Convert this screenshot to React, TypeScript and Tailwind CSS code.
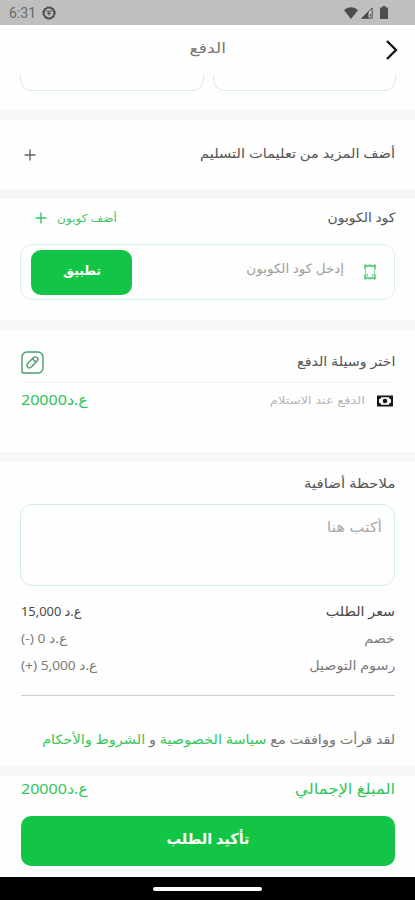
import React from 'react';
import { clsx } from 'clsx';

interface LabelProps {
  children: React.ReactNode;
  className?: string;
}

const Label: React.FC<LabelProps> = ({ children, className }) => (
  <span className={clsx('inline-block whitespace-nowrap', className)}>{children}</span>
);

const Divider = () => <div className="h-2.5 shrink-0 bg-[#f5f8f6]" />;

const StatusBar = () => (
  <div dir="ltr" className="flex h-[25px] shrink-0 items-center bg-[#bfbfbf] pl-[9px] pr-[27px] text-[#4d4d4d]">
    <span className="w-[27px] font-[Roboto] text-[14px] leading-none text-[#686868]">6:31</span>
    <svg className="ml-[6px]" width="14" height="14" viewBox="0 0 14 14" fill="none" stroke="currentColor">
      <circle cx="7" cy="7" r="5.3" strokeWidth="1.8" />
      <circle cx="7" cy="7" r="6.3" strokeWidth="1" strokeDasharray="1.6 1.7" />
      <path d="M4 5.2h6M7 5.4v4.2M5 7.4h4" strokeWidth="1" />
    </svg>
    <div className="ml-auto flex items-center">
      <svg width="14" height="12" viewBox="0 0 14 12" fill="currentColor">
        <path d="M0 3.2C4-.9 10-.9 14 3.2L7 12z" />
      </svg>
      <svg className="ml-[3px]" width="12" height="12" viewBox="0 0 12 12">
        <path d="M11.2.9v10.3H.9z" fill="none" stroke="currentColor" strokeWidth="1" />
        <path d="M7.5 4.5v7H.3z" fill="currentColor" />
        <path d="M9.5 7v2.5" stroke="currentColor" strokeWidth="1" />
      </svg>
      <svg className="ml-[7px]" width="8" height="13" viewBox="0 0 8 13" fill="currentColor">
        <path d="M2.5 0h3v1.5H8V13H0V1.5h2.5z" />
      </svg>
    </div>
  </div>
);

const PlusIcon: React.FC<{ className?: string }> = ({ className }) => (
  <svg className={className} width="12" height="12" viewBox="0 0 12 12" fill="none" stroke="currentColor" strokeWidth="1.4">
    <path d="M6 .5v11M.5 6h11" />
  </svg>
);

const TicketIcon = () => (
  <svg width="12" height="16" viewBox="0 0 12 16" fill="none" stroke="#3cc561" strokeWidth="1.4">
    <path d="M1 10.500V14.800c1.500 0 1.500-1.300 2.500-1.300s1.500 1.300 2.500 1.300 1.500-1.300 2.500-1.300 1 1.300 2.500 1.300v-4.300M1 5.500V1.200c1.500 0 1.500 1.300 2.500 1.300S5 1.200 6 1.200s1.500 1.300 2.500 1.300S9.500 1.200 11 1.200v4.300" />
    <path d="M1 5.500c1 1.500 1 3.500 0 5M11 5.500c-1 1.500-1 3.500 0 5" strokeWidth="0.800" />
    <path d="M2.500 11h1.500M8 11h1.500" />
  </svg>
);

const EditIcon = () => (
  <svg width="23" height="23" viewBox="0 0 23 23" fill="none" stroke="#4a9d6a" strokeWidth="1.4">
    <path d="M1 6a5 5 0 0 1 5-5h11a5 5 0 0 1 5 5v11a5 5 0 0 1-5 5H2.500Q1 22 1 20.500z" />
    <path
      d="M6.500 12.700 12.300 6.800c1.300-1.300 3-1.300 4 0 .9 1.100.7 2.400-.4 3.500l-5.300 5.400c-1 1-2.600 1.400-3.700 1-.9-.8-1.300-3-.4-4zM12 7.500c.3 1.800 1.500 3 3.300 3.300"
      strokeWidth="1.400"
      strokeLinejoin="round"
    />
  </svg>
);

const CashIcon = () => (
  <svg width="16" height="12" viewBox="0 0 16 12">
    <path d="M0 .5h16v11H0z" fill="#151515" />
    <path d="M4 2.300h8c0 1.300.7 2 2 2v3.400c-1.300 0-2 .7-2 2H4c0-1.300-.7-2-2-2V4.300c1.300 0 2-.7 2-2z" fill="#fff" />
    <circle cx="8" cy="6" r="2.300" fill="#151515" />
  </svg>
);

const prices = [
  { label: 'سعر الطلب', value: 'ع.د 15,000', tone: 'text-[#484848]', stretch: 'scale-x-[0.99]' },
  { label: 'خصم', value: 'ع.د 0 (-)', tone: 'text-[#808080]', stretch: 'scale-x-[1.07]' },
  { label: 'رسوم التوصيل', value: 'ع.د 5,000 (+)', tone: 'text-[#7a7a7a]', stretch: 'scale-x-[1.055]' },
];

const App = () => {
  return (
    <div
      dir="rtl"
      className="flex h-[900px] w-[415px] flex-col overflow-hidden bg-[#fefefe] font-['Noto_Sans','DejaVu_Sans',sans-serif] leading-none text-[#555]"
    >
      <StatusBar />

      <header className="grid h-[50px] shrink-0 grid-cols-[40px_1fr_40px] items-center px-4">
        <svg width="13" height="20" viewBox="0 0 13 20" fill="none" stroke="#111" strokeWidth="2.300">
          <path d="m1 1 9 9-9 9" />
        </svg>
        <h1 className="pb-1 text-center text-[14px] text-[#777]">
          <Label className="scale-x-[1.23]">الدفع</Label>
        </h1>
      </header>

      <div className="flex h-[35px] shrink-0 gap-[9px] pl-5 pr-[19px]">
        <div className="h-4 flex-1 rounded-b-xl border border-t-0 border-[#d9f1e4]" />
        <div className="h-4 flex-1 rounded-b-xl border border-t-0 border-[#d9f1e4]" />
      </div>
      <Divider />

      <section className="flex h-[69px] shrink-0 items-center justify-between pl-6 pr-5">
        <Label className="origin-right scale-x-[1.127] pb-[3px] text-[13px]">أضف المزيد من تعليمات التسليم</Label>
        <PlusIcon className="text-[#666]" />
      </section>
      <Divider />

      <section className="h-[121px] shrink-0 px-5">
        <div className="flex h-[38px] items-center justify-between pl-[15px]">
          <Label className="origin-right scale-x-[1.07] pb-0.5 text-[13px]">كود الكوبون</Label>
          <div className="flex items-center gap-[10px] text-[#3fc563]">
            <Label className="origin-left scale-x-[1.1] pb-0.5 text-[11px]">أضف كوبون</Label>
            <PlusIcon />
          </div>
        </div>
        <div className="mt-[7px] flex h-14 items-center rounded-xl border border-[#d9f1e4] pl-[10px] pr-[18px]">
          <TicketIcon />
          <Label className="mr-5 origin-right scale-x-[1.04] pb-[7px] text-[13px] text-[#a0a0a0]">إدخل كود الكوبون</Label>
          <button className="mr-auto h-[45px] w-[101px] rounded-[10px] bg-[#12c546] pb-1 text-[13px] font-bold text-white">
            <Label className="scale-x-[0.95]">تطبيق</Label>
          </button>
        </div>
      </section>
      <Divider />

      <section className="h-[122px] shrink-0 pl-[21px] pr-5">
        <div className="flex h-[53px] items-center justify-between border-b border-[#f4f4f4] pt-[13px]">
          <Label className="origin-right scale-x-[1.1] pb-[3px] text-[13px]">اختر وسيلة الدفع</Label>
          <EditIcon />
        </div>
        <div className="flex h-[35px] items-center">
          <span className="mr-0.5">
            <CashIcon />
          </span>
          <Label className="mr-3 origin-right scale-x-[1.19] pb-0.5 text-[11px] text-[#b5b5b5]">الدفع عند الاستلام</Label>
          <Label className="mr-auto origin-left scale-x-[1.07] pb-0.5 text-[15px] text-[#2fc356]">ع.د20000</Label>
        </div>
      </section>
      <Divider />

      <section className="h-[304px] shrink-0 pl-[21px] pr-5">
        <div className="flex h-[42px] items-center">
          <Label className="origin-right scale-x-[1.15] text-[13px]">ملاحظة أضافية</Label>
        </div>
        <div className="-ml-px h-[82px] rounded-xl border border-[#d0f0df] px-3 pt-[13px]">
          <Label className="origin-right scale-x-[1.15] text-[14px] text-[#aaa]">أكتب هنا</Label>
        </div>
        <div className="pt-3">
          {prices.map((row) => (
            <div key={row.label} className={clsx('flex h-[27px] items-center justify-between text-[13px]', row.tone)}>
              <Label className="origin-right scale-x-[1.1]">{row.label}</Label>
              <Label className={clsx('origin-left', row.stretch)}>{row.value}</Label>
            </div>
          ))}
        </div>
        <div className="mt-4 h-px bg-[#cfcfcf]" />
        <div className="mt-[33px] flex h-5 items-center text-[13px] text-[#777]">
          <Label className="origin-right scale-x-[1.113]">
            لقد قرأت ووافقت مع <span className="text-[#35c65a]">سياسة الخصوصية</span> و{' '}
            <span className="text-[#35c65a]">الشروط والأحكام</span>
          </Label>
        </div>
      </section>
      <Divider />

      <footer className="h-[101px] shrink-0 pl-[21px] pr-5">
        <div className="flex h-[26px] items-center justify-between text-[15px] text-[#35c65a]">
          <Label className="origin-right scale-x-[1.1] pb-0.5">المبلغ الإجمالي</Label>
          <Label className="origin-left scale-x-[1.07] pb-0.5">ع.د20000</Label>
        </div>
        <button className="mt-[14px] h-[50px] w-full rounded-[10px] bg-[#12c546] pb-[5px] text-[15px] font-bold text-white">
          <Label className="scale-x-[0.965]">تأكيد الطلب</Label>
        </button>
      </footer>

      <div className="flex h-[23px] shrink-0 items-center justify-center bg-black">
        <div className="h-1 w-[109px] rounded-full bg-white" />
      </div>
    </div>
  );
};

export default App;
